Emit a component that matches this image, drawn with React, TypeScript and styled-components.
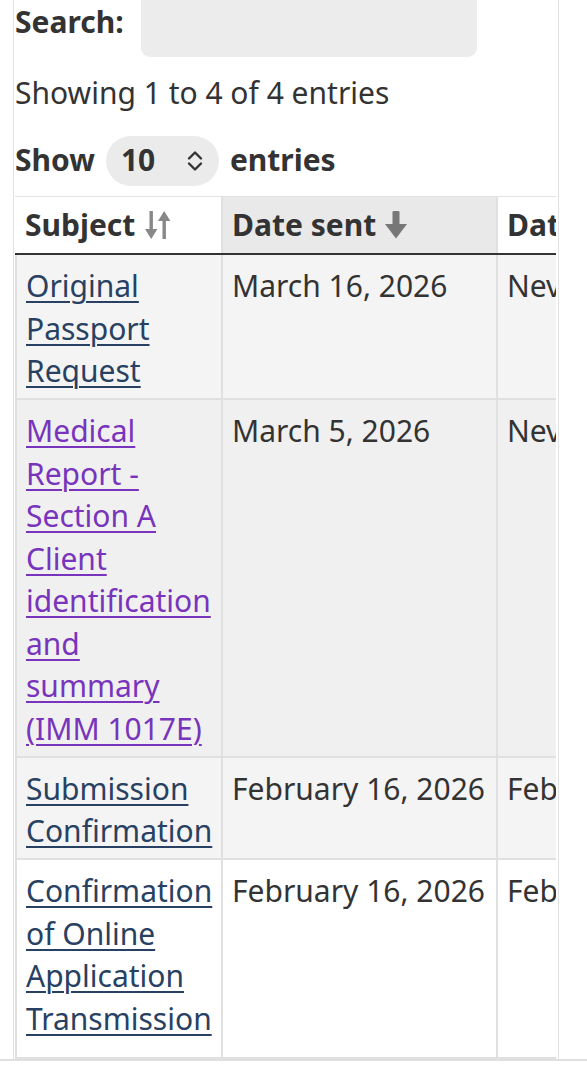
import React from "react";
import styled, { createGlobalStyle } from "styled-components";

const Global = createGlobalStyle`
  html, body { margin: 0; padding: 0; background: #fff; }
  body { font-family: "Noto Sans", "Open Sans", sans-serif; color: #333; overflow: hidden; }
`;

const Panel = styled.div`
  margin-left: 13px;
  width: 543px;
  border-left: 1px solid #e2e2e2;
  border-right: 1px solid #e2e2e2;
  padding-left: 1px;
  font-size: 30px;
  line-height: 42.5px;
`;

const SearchRow = styled.label`
  display: flex;
  align-items: center;
  gap: 17px;
  margin-top: -12px;
  font-weight: 700;
`;

const SearchInput = styled.div`
  width: 336px;
  height: 69px;
  background: #ececec;
  border-radius: 9px;
`;

const Info = styled.p`
  margin: 15px 0 0;
`;

const LengthRow = styled.div`
  display: flex;
  align-items: center;
  gap: 11px;
  margin-top: 21px;
  height: 50px;
  font-weight: 700;
`;

const Select = styled.div`
  display: flex;
  align-items: center;
  justify-content: space-between;
  width: 113px;
  height: 50px;
  box-sizing: border-box;
  padding: 0 15px 0 15px;
  background: #ebebeb;
  border-radius: 25px;
  font-weight: 700;
`;

const Scroller = styled.div`
  margin-top: 10px;
  overflow: hidden;
  width: 541px;
  border-top: 1px solid #e2e2e2;
`;

const Table = styled.table`
  border-collapse: collapse;
  table-layout: fixed;
  width: 820px;
`;

const Th = styled.th<{ $sorted?: boolean; $first?: boolean }>`
  text-align: left;
  font-weight: 700;
  padding: 7px 9px 7px;
  white-space: nowrap;
  background: ${(p) => (p.$sorted ? "#e9e9e9" : "#fff")};
  border-left: ${(p) => (p.$first ? "none" : "2px solid #e0e0e0")};
  border-right: 2px solid #e0e0e0;
  border-bottom: 2px solid #333;
`;

const HeadInner = styled.span`
  display: inline-flex;
  align-items: center;
  gap: 8px;
`;

const Tr = styled.tr<{ $shade: string }>`
  background: ${(p) => p.$shade};
`;

const Td = styled.td<{ $last?: boolean }>`
  vertical-align: top;
  padding: 10px 6px ${(p) => (p.$last ? "17px" : "5.5px")} 9px;
  border: 2px solid #e0e0e0;
  white-space: normal;
`;

const DateCell = styled(Td)`
  white-space: nowrap;
`;

const Link = styled.a<{ $visited?: boolean }>`
  color: ${(p) => (p.$visited ? "#7834bc" : "#284162")};
  text-decoration: underline;
  text-decoration-thickness: 1.5px;
  text-underline-offset: 4px;
`;

const Footer = styled.div`
  border-top: 2px solid #e0e0e0;
  height: 20px;
`;

const SortBoth = () => (
  <svg width="30" height="32" viewBox="0 0 30 32" fill="#888">
    <rect x="6.5" y="2" width="3.4" height="21" />
    <path d="M2 20 L8.2 30 L14.4 20 Z" />
    <rect x="19.5" y="9" width="3.4" height="21" />
    <path d="M15 12 L21.2 2 L27.4 12 Z" />
  </svg>
);

const SortDown = () => (
  <svg width="24" height="30" viewBox="0 0 24 30" fill="#777">
    <rect x="8.5" y="1" width="7" height="16" rx="1.2" />
    <path d="M1 14 L23 14 L12 28.5 Z" />
  </svg>
);

const UpDown = () => (
  <svg width="18" height="26" viewBox="0 0 18 26" fill="none" stroke="#333" strokeWidth="2.4" strokeLinecap="round" strokeLinejoin="round">
    <path d="M3 10.5 L9 4.5 L15 10.5" />
    <path d="M3 15.5 L9 21.5 L15 15.5" />
  </svg>
);

const rows = [
  { subject: "Original Passport Request", sent: "March 16, 2026", read: "Never", shade: "#f4f4f4", visited: false },
  { subject: "Medical Report - Section A Client identification and summary (IMM 1017E)", sent: "March 5, 2026", read: "Never", shade: "#f0f0f0", visited: true },
  { subject: "Submission Confirmation", sent: "February 16, 2026", read: "February 16, 2026", shade: "#f4f4f4", visited: false },
  { subject: "Confirmation of Online Application Transmission", sent: "February 16, 2026", read: "February 16, 2026", shade: "#ffffff", visited: false },
];

export default function App() {
  return (
    <>
      <Global />
      <Panel>
        <SearchRow>
          Search:
          <SearchInput />
        </SearchRow>
        <Info>Showing 1 to 4 of 4 entries</Info>
        <LengthRow>
          Show
          <Select>
            <span>10</span>
            <UpDown />
          </Select>
          entries
        </LengthRow>
        <Scroller>
          <Table>
            <colgroup>
              <col style={{ width: 206 }} />
              <col style={{ width: 275 }} />
              <col style={{ width: 339 }} />
            </colgroup>
            <thead>
              <tr>
                <Th $first>
                  <HeadInner>
                    Subject <SortBoth />
                  </HeadInner>
                </Th>
                <Th $sorted>
                  <HeadInner>
                    Date sent <SortDown />
                  </HeadInner>
                </Th>
                <Th>Date read</Th>
              </tr>
            </thead>
            <tbody>
              {rows.map((r, i) => (
                <Tr key={i} $shade={r.shade}>
                  <Td $last={i === rows.length - 1}>
                    <Link href="#" $visited={r.visited}>
                      {r.subject}
                    </Link>
                  </Td>
                  <DateCell $last={i === rows.length - 1}>{r.sent}</DateCell>
                  <DateCell $last={i === rows.length - 1}>{r.read}</DateCell>
                </Tr>
              ))}
            </tbody>
          </Table>
        </Scroller>
      </Panel>
      <Footer />
    </>
  );
}
